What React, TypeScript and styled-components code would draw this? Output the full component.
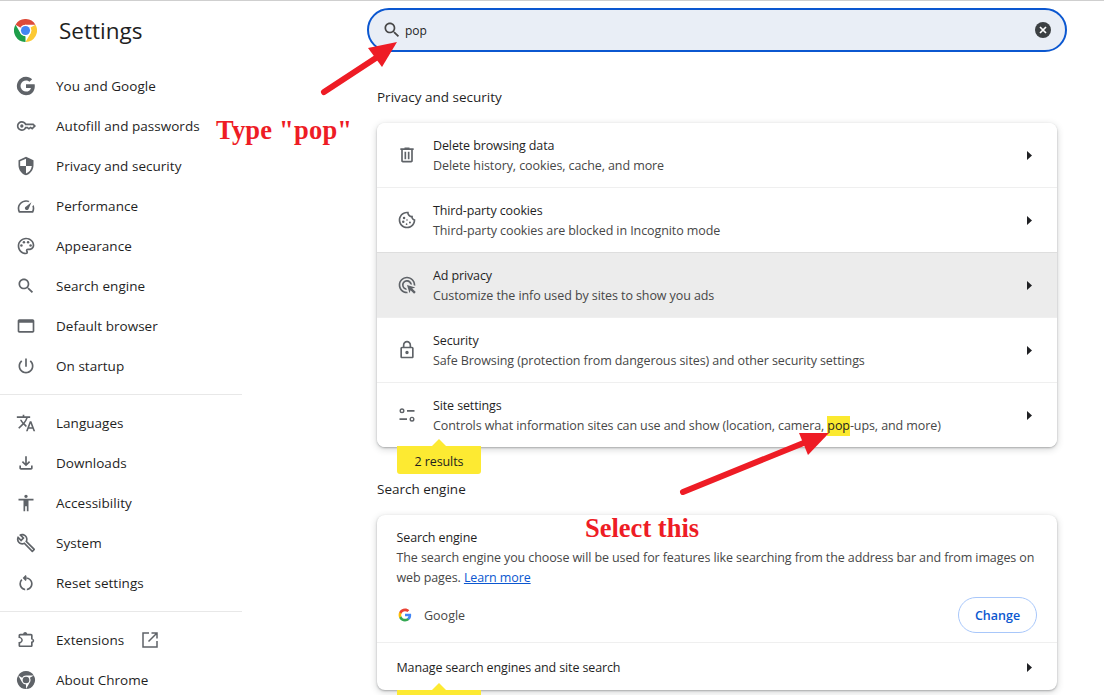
import React from "react";
import styled, { createGlobalStyle } from "styled-components";

const Global = createGlobalStyle`
  html, body { margin: 0; padding: 0; background: #fff; }
  body { font-family: "Open Sans", "Noto Sans", "Liberation Sans", sans-serif; font-size: 13px; color: #1f1f1f; }
`;

const Page = styled.div`
  position: relative; width: 1104px; height: 695px; overflow: hidden;
  display: flex; box-sizing: border-box; border-top: 1px solid #cfcfcf; background: #fff;
`;
const Sidebar = styled.aside`
  width: 242px; flex: none; display: flex; flex-direction: column;
`;
const Brand = styled.div`
  display: flex; align-items: center; height: 62px; padding-left: 14px; box-sizing: border-box; flex: none; padding-bottom: 4px;
`;
const BrandName = styled.h1`
  margin: 0 0 0 22px; font-size: 22.5px; font-weight: 500; color: #1f1f1f;
`;
const Nav = styled.nav`
  display: flex; flex-direction: column; padding-top: 3px;
`;
const NavItem = styled.div`
  height: 40px; flex: none; display: flex; align-items: center; padding-left: 16px;
`;
const NavIcon = styled.svg`
  width: 20px; height: 20px; flex: none; fill: #5f6368;
`;
const NavLabel = styled.span`
  margin-left: 20px; font-size: 13.5px; font-weight: 500; letter-spacing: 0.03px; color: #1f1f1f; white-space: nowrap;
`;
const NavDivider = styled.div`
  height: 1px; background: #e8e8e8; margin: 8px 0;
`;
const ExternalIcon = styled.svg`
  width: 18px; height: 18px; margin-left: 17px; fill: none; stroke: #5f6368; stroke-width: 1.5;
`;

const Main = styled.main`
  margin-left: 125px; width: 700px; display: flex; flex-direction: column;
`;
const SearchBar = styled.div`
  margin-top: 7px; height: 44px; box-sizing: border-box; border: 2px solid #0b57d0; border-radius: 22px;
  background: #e9eef6; display: flex; align-items: center; padding: 0 13px 0 13px; flex: none;
`;
const SearchIcon = styled.svg`
  width: 20px; height: 20px; fill: #474747; flex: none;
`;
const SearchText = styled.span`
  margin-left: 3px; padding-top: 1px; font-size: 12px; font-weight: 500; flex: 1; color: #1f1f1f;
`;
const ClearIcon = styled.svg`
  width: 18px; height: 18px; flex: none;
`;
const Section = styled.section`
  margin: 0 10px; position: relative; display: flex; flex-direction: column;
`;
const SectionTitle = styled.h2<{ $top: number; $bottom: number }>`
  margin: ${(p) => p.$top}px 0 ${(p) => p.$bottom}px; font-size: 13.5px; line-height: 20px; font-weight: 400;
  color: #1f1f1f;
`;
const Card = styled.div`
  background: #fff; border-radius: 8px; display: flex; flex-direction: column; overflow: hidden;
  box-shadow: 0 1px 2px rgba(60,64,67,.35), 0 2px 6px 1px rgba(60,64,67,.18);
`;
const Row = styled.div<{ $active?: boolean; $first?: boolean }>`
  height: ${(p) => (p.$first ? 64 : 65)}px; box-sizing: border-box; flex: none; display: flex; align-items: center;
  padding: 0 20px; background: ${(p) => (p.$active ? "#ececec" : "#fff")};
  border-top: ${(p) => (p.$first ? "none" : `1px solid ${p.$active ? "#dedede" : "#efefef"}`)};
`;
const RowIcon = styled.svg`
  width: 20px; height: 20px; fill: #5f6368; flex: none; margin-right: 16px;
`;
const RowText = styled.div`
  flex: 1; display: flex; flex-direction: column; line-height: 20px; white-space: nowrap; padding-top: 2px;
`;
const RowTitle = styled.div`
  font-size: 12.5px; color: #1f1f1f; letter-spacing: -0.12px;
`;
const RowSub = styled.div`
  font-size: 12.5px; color: #474747; letter-spacing: -0.09px;
`;
const Mark = styled.mark`
  background: #fbe92f; color: #1f1f1f; display: inline-block;
`;
const Caret = styled.svg`
  width: 5px; height: 9px; fill: #202124; flex: none; margin-right: 5px;
`;
const Bubble = styled.div<{ $top: number }>`
  position: absolute; left: 20px; top: ${(p) => p.$top}px; width: 84px; height: 28px; background: #fdea32; border-radius: 0 0 3px 3px;
  display: flex; align-items: center; justify-content: center; padding-top: 2px; box-sizing: border-box;
  font-size: 12.5px; color: #1f1f1f; letter-spacing: -0.1px;
  &::before {
    content: ""; position: absolute; left: 35px; top: -7px; border-left: 7px solid transparent; border-right: 7px solid transparent;
    border-bottom: 7px solid #fdea32;
  }
`;
const EngineIntro = styled.div`
  padding: 13px 20px 0 19.5px; line-height: 20px; height: 78px; box-sizing: border-box; flex: none;
`;
const EngineSub = styled.div`
  font-size: 12.5px; color: #474747; letter-spacing: -0.1px;
`;
const Link = styled.a`
  color: #0b57d0; text-decoration: underline;
`;
const EngineChoice = styled.div`
  display: flex; align-items: center; padding: 0 20px 5px 20px; height: 49px; flex: none; box-sizing: border-box;
`;
const GoogleMark = styled.svg`
  width: 14px; height: 14px; margin-left: 1px; flex: none;
`;
const EngineName = styled.span`
  margin-left: 12px; flex: 1; font-size: 12.5px; color: #474747;
`;
const ChangeButton = styled.button`
  width: 79px; height: 36px; box-sizing: border-box; border: 1px solid #a8c7fa; border-radius: 18px; background: #fff;
  color: #0b57d0; font: 600 12.5px "Open Sans", sans-serif; padding: 0;
`;
const ManageRow = styled.div`
  height: 48px; box-sizing: border-box; border-top: 1px solid #efefef; display: flex; align-items: center; padding: 2px 20px 0 19.5px;
  font-size: 12.5px; letter-spacing: -0.12px; justify-content: space-between; flex: none;
`;
const Annotation = styled.div<{ $left: number; $top: number; $spacing?: number }>`
  position: absolute; left: ${(p) => p.$left}px; top: ${(p) => p.$top}px; letter-spacing: ${(p) => p.$spacing ?? 0}px;
  font: bold 26.5px/30px "Liberation Serif", serif; color: #ee1c25; white-space: nowrap;
`;
const Overlay = styled.svg`
  position: absolute; left: 0; top: -1px; width: 1104px; height: 695px; pointer-events: none;
`;

const P = {
  key: "M7 14a2 2 0 1 1 0-4 2 2 0 0 1 0 4zm0 4q-2.500 0-4.250-1.750T1 12q0-2.500 1.750-4.250T7 6q1.675 0 3.038.825T12.200 9H21l3 3-4.500 4.500-2-1.500-2 1.500L13.375 15H12.200q-.8 1.350-2.163 2.175T7 18zm0-2q1.400 0 2.463-.85T10.850 13h3.150l1.450 1.025L17.500 12.500l1.775 1.375L21.150 12l-1-1H10.850q-.3-1.300-1.388-2.150T7 8q-1.650 0-2.825 1.175T3 12t1.175 2.825T7 16z",
  shield: "M12 1 3 5v6c0 5.55 3.84 10.74 9 12 5.16-1.26 9-6.45 9-12V5l-9-4zm0 10.99h7c-.53 4.12-3.28 7.79-7 8.94V12H5V6.3l7-3.11v8.8z",
  gauge: "M12 5C6.5 5 2 9.5 2 15c0 1.9.5 3.6 1.4 5h17.2c.9-1.4 1.4-3.1 1.4-5 0-1.5-.3-2.9-.9-4.2l-1.5 1.5c.3.8.4 1.7.4 2.7 0 1.1-.3 2.1-.7 3H4.7c-.4-.9-.7-1.9-.7-3 0-4.4 3.6-8 8-8 1 0 1.9.2 2.7.5l1.5-1.5C14.9 5.3 13.5 5 12 5zm6.5 2.5-6.4 5a2.3 2.3 0 1 0 3 3l3.4-8z",
  palette: "M12 22C6.49 22 2 17.51 2 12S6.49 2 12 2s10 4.04 10 9c0 3.31-2.69 6-6 6h-1.77c-.28 0-.5.22-.5.5 0 .12.05.23.13.33.41.47.64 1.06.64 1.67A2.5 2.5 0 0 1 12 22zm0-18c-4.41 0-8 3.59-8 8s3.59 8 8 8c.28 0 .5-.22.5-.5a.54.54 0 0 0-.14-.35c-.41-.46-.63-1.05-.63-1.65a2.5 2.5 0 0 1 2.5-2.5H16c2.21 0 4-1.79 4-4 0-3.86-3.59-7-8-7z",
  search: "M15.5 14h-.79l-.28-.27C15.41 12.59 16 11.11 16 9.5 16 5.91 13.09 3 9.5 3S3 5.91 3 9.5 5.91 16 9.5 16c1.61 0 3.09-.59 4.23-1.57l.27.28v.79l5 4.99L20.49 19l-4.99-5zm-6 0C7.01 14 5 11.99 5 9.5S7.01 5 9.5 5 14 7.01 14 9.5 11.99 14 9.5 14z",
  browser: "M20 4H4c-1.1 0-2 .9-2 2v12c0 1.1.9 2 2 2h16c1.1 0 2-.9 2-2V6c0-1.1-.9-2-2-2zm0 14H4V8h16v10z",
  power: "M13 3h-2v10h2V3zm4.83 2.17l-1.42 1.42C17.99 7.86 19 9.81 19 12c0 3.87-3.13 7-7 7s-7-3.13-7-7c0-2.19 1.01-4.14 2.58-5.42L6.17 5.17C4.23 6.82 3 9.26 3 12c0 4.97 4.03 9 9 9s9-4.03 9-9c0-2.74-1.23-5.18-3.17-6.83z",
  translate: "M12.87 15.07l-2.54-2.51.03-.03c1.74-1.94 2.98-4.17 3.71-6.53H17V4h-7V2H8v2H1v1.99h11.17C11.5 7.92 10.44 9.75 9 11.35 8.07 10.32 7.3 9.19 6.69 8h-2c.73 1.63 1.73 3.17 2.98 4.56l-5.09 5.02L4 19l5-5 3.11 3.11.76-2.04zM18.5 10h-2L12 22h2l1.12-3h4.75L21 22h2l-4.5-12zm-2.62 7l1.62-4.33L19.12 17h-3.24z",
  download: "M12 16 7 11l1.4-1.45 2.6 2.6V4h2v8.15l2.6-2.6L17 11l-5 5Zm-6 4q-.825 0-1.413-.588T4 18v-3h2v3h12v-3h2v3q0 .825-.588 1.413T18 20H6Z",
  access: "M12 2c1.1 0 2 .9 2 2s-.9 2-2 2-2-.9-2-2 .9-2 2-2zm9 7h-6v13h-2v-6h-2v6H9V9H3V7h18v2z",
  wrench: "m22.61 18.99-9.08-9.08c.93-2.34.45-5.1-1.44-7C9.79.61 6.21.4 3.66 2.25L7.5 6.1 6.08 7.51 2.25 3.69C.39 6.23.6 9.82 2.9 12.11c1.86 1.86 4.57 2.35 6.89 1.48l9.11 9.11c.39.39 1.02.39 1.41 0l2.3-2.3c.4-.38.4-1.01 0-1.41zm-3 1.6-9.46-9.46c-.61.45-1.29.72-2 .82-1.36.2-2.79-.21-3.83-1.25C3.37 9.76 2.93 8.5 3 7.26l3.09 3.09 4.24-4.24-3.09-3.09c1.24-.07 2.49.37 3.44 1.31 1.08 1.08 1.49 2.57 1.24 3.96-.12.71-.42 1.37-.88 1.96l9.45 9.45-.88.88z",
  reset: "M6 13c0-1.65.67-3.15 1.76-4.24L6.34 7.34A7.95 7.95 0 0 0 4 13c0 4.08 3.05 7.44 7 7.93v-2.02c-2.83-.48-5-2.94-5-5.91zm14 0c0-4.42-3.58-8-8-8-.06 0-.12.01-.18.01l1.09-1.09L11.5 2.5 8 6l3.5 3.5 1.41-1.41-1.08-1.08c.06 0 .12-.01.17-.01 3.31 0 6 2.69 6 6 0 2.97-2.17 5.43-5 5.91v2.02c3.95-.49 7-3.85 7-7.93z",
  extension: "M11 2.5c-1.2 0-2.2.9-2.4 2H5C3.9 4.5 3 5.400 3 6.500v3.200h.8c1.500 0 2.600 1.100 2.600 2.400S5.300 14.500 3.800 14.500H3v4c0 1.100.9 2 2 2h13c1.100 0 2-.9 2-2v-3.100c1.100-.3 1.800-1.300 1.800-2.400s-.7-2.100-1.800-2.400V6.500c0-1.100-.9-2-2-2h-4.600c-.2-1.100-1.200-2-2.400-2zM5 6.500h13v5h.9c.6 0 1 .6 1 1.100s-.4 1.200-1 1.200H18v4.700H5v-2.300c1.900-.7 3.200-2.400 3.200-4.100S6.900 9 5 8.300V6.500z",
  trash: "M15 4V3H9v1H4v2h1v13c0 1.1.9 2 2 2h10c1.1 0 2-.9 2-2V6h1V4h-5zm2 15H7V6h10v13zM9 8h2v9H9zm4 0h2v9h-2z",
  cookie: "M21.95 10.99c-1.79-.03-3.7-1.95-2.68-4.22-2.97 1-5.78-1.59-5.19-4.56C7.11.74 2 6.41 2 12c0 5.52 4.48 10 10 10 5.89 0 10.54-5.08 9.95-11.01zM12 20c-4.41 0-8-3.59-8-8 0-3.31 2.73-8.18 8.08-8.02.42 2.54 2.44 4.56 4.99 4.94.07.36.52 2.55 2.92 3.63C19.7 16.86 16.06 20 12 20z",
  ads: "M11.71 17.99A5.993 5.993 0 0 1 6 12c0-3.31 2.69-6 6-6 3.22 0 5.84 2.53 5.99 5.71l-2.1-.63a3.999 3.999 0 1 0-4.81 4.81l.63 2.1zM22 12c0 .3-.01.6-.04.9l-1.97-.59c.01-.1.01-.21.01-.31 0-4.42-3.58-8-8-8s-8 3.58-8 8 3.58 8 8 8c.1 0 .21 0 .31-.01l.59 1.97c-.3.03-.6.04-.9.04-5.52 0-10-4.48-10-10S6.48 2 12 2s10 4.48 10 10zm-3.77 4.26L22 15l-10-3 3 10 1.26-3.77 4.27 4.27 1.98-1.98-4.28-4.26z",
  lock: "M18 8h-1V6c0-2.76-2.24-5-5-5S7 3.24 7 6v2H6c-1.1 0-2 .9-2 2v10c0 1.1.9 2 2 2h12c1.1 0 2-.9 2-2V10c0-1.1-.9-2-2-2zM9 6c0-1.66 1.34-3 3-3s3 1.34 3 3v2H9V6zm9 14H6V10h12v10zm-6-3c1.1 0 2-.9 2-2s-.9-2-2-2-2 .9-2 2 .9 2 2 2z",
  tune: "M6 4a3 3 0 1 0 0 6 3 3 0 0 0 0-6zm0 1.700a1.300 1.300 0 1 1 0 2.600 1.300 1.300 0 0 1 0-2.600zM12 6h9v2h-9zM18 14a3 3 0 1 0 0 6 3 3 0 0 0 0-6zm0 1.700a1.300 1.300 0 1 1 0 2.600 1.300 1.300 0 0 1 0-2.600zM3 16h9v2H3z",
};

const G_PATHS = [
  ["#4285F4", "M22.56 12.25c0-.78-.07-1.53-.2-2.25H12v4.26h5.92c-.26 1.37-1.04 2.53-2.21 3.31v2.77h3.57c2.08-1.92 3.28-4.74 3.28-8.09z"],
  ["#34A853", "M12 23c2.97 0 5.46-.98 7.28-2.66l-3.57-2.77c-.98.66-2.23 1.06-3.71 1.06-2.86 0-5.29-1.93-6.16-4.53H2.18v2.84C3.99 20.53 7.7 23 12 23z"],
  ["#FBBC05", "M5.84 14.09c-.22-.66-.35-1.36-.35-2.09s.13-1.43.35-2.09V7.07H2.18C1.43 8.55 1 10.22 1 12s.43 3.45 1.18 4.93l2.85-2.22.81-.62z"],
  ["#EA4335", "M12 5.38c1.62 0 3.06.56 4.21 1.64l3.15-3.15C17.45 2.09 14.97 1 12 1 7.7 1 3.99 3.47 2.18 7.07l3.66 2.84c.87-2.6 3.3-4.53 6.16-4.53z"],
];

const LogoSvg = styled.svg`
  width: 23px; height: 23px; flex: none;
`;
const SECTOR = "M3.2 12A24 24 0 0 1 44.800 12H24A12 12 0 0 0 13.600 18Z";
const ChromeLogo = () => (
  <LogoSvg viewBox="0 0 48 48">
    <circle cx="24" cy="24" r="24" fill="#fff" />
    <path d={SECTOR} fill="#dd4b3a" />
    <path d={SECTOR} fill="#fcc934" transform="rotate(120 24 24)" />
    <path d={SECTOR} fill="#1e9e4a" transform="rotate(240 24 24)" />
    <circle cx="24" cy="24" r="12" fill="#fff" />
    <circle cx="24" cy="24" r="9.500" fill="#4285f4" />
  </LogoSvg>
);
const ChromeMono = () => (
  <NavIcon viewBox="0 0 48 48">
    <path d={SECTOR} transform="translate(24 24) scale(.9) translate(-24 -24)" />
    <path d={SECTOR} transform="rotate(120 24 24) translate(24 24) scale(.9) translate(-24 -24)" />
    <path d={SECTOR} transform="rotate(240 24 24) translate(24 24) scale(.9) translate(-24 -24)" />
    <circle cx="24" cy="24" r="8" />
  </NavIcon>
);
const Icon = ({ d, children }: { d: string; children?: React.ReactNode }) => (
  <NavIcon viewBox="0 0 24 24"><path d={d} fillRule="evenodd" />{children}</NavIcon>
);
const RIcon = ({ d, children }: { d: string; children?: React.ReactNode }) => (
  <RowIcon viewBox="0 0 24 24"><path d={d} />{children}</RowIcon>
);
const RightCaret = () => <Caret viewBox="0 0 5 9"><path d="M0 0 5 4.500 0 9z" /></Caret>;

const navA: [string, React.ReactNode][] = [
  ["You and Google", <NavIcon key="g" viewBox="0 0 24 24">{G_PATHS.map(([, d]) => <path key={d} d={d} />)}</NavIcon>],
  ["Autofill and passwords", <Icon key="k" d={P.key} />],
  ["Privacy and security", <Icon key="s" d={P.shield} />],
  ["Performance", <Icon key="p" d={P.gauge} />],
  ["Appearance", <Icon key="a" d={P.palette}><circle cx="6.5" cy="11.500" r="1.500" /><circle cx="9.500" cy="7.500" r="1.500" /><circle cx="14.500" cy="7.500" r="1.500" /><circle cx="17.500" cy="11.500" r="1.500" /></Icon>],
  ["Search engine", <Icon key="se" d={P.search} />],
  ["Default browser", <Icon key="b" d={P.browser} />],
  ["On startup", <Icon key="o" d={P.power} />],
];
const navB: [string, React.ReactNode][] = [
  ["Languages", <Icon key="l" d={P.translate} />],
  ["Downloads", <Icon key="d" d={P.download} />],
  ["Accessibility", <Icon key="ac" d={P.access} />],
  ["System", <Icon key="w" d={P.wrench} />],
  ["Reset settings", <Icon key="r" d={P.reset} />],
];

const rows = [
  { t: "Delete browsing data", s: "Delete history, cookies, cache, and more", i: <RIcon d={P.trash} /> },
  { t: "Third-party cookies", s: "Third-party cookies are blocked in Incognito mode", i: <RIcon d={P.cookie}><circle cx="8.500" cy="9.500" r="1.500" /><circle cx="7.500" cy="14" r="1.500" /><circle cx="11.500" cy="17" r="1" /><circle cx="15.500" cy="15" r="1.200" /><circle cx="12" cy="12" r="1" /></RIcon> },
  { t: "Ad privacy", s: "Customize the info used by sites to show you ads", i: <RIcon d={P.ads} />, active: true },
  { t: "Security", s: "Safe Browsing (protection from dangerous sites) and other security settings", i: <RIcon d={P.lock} /> },
];

export default function App() {
  return (
    <>
      <Global />
      <Page>
        <Sidebar>
          <Brand>
            <ChromeLogo />
            <BrandName>Settings</BrandName>
          </Brand>
          <Nav>
            {navA.map(([l, i]) => <NavItem key={l}>{i}<NavLabel>{l}</NavLabel></NavItem>)}
            <NavDivider />
            {navB.map(([l, i]) => <NavItem key={l}>{i}<NavLabel>{l}</NavLabel></NavItem>)}
            <NavDivider />
            <NavItem>
              <Icon d={P.extension} />
              <NavLabel>Extensions</NavLabel>
              <ExternalIcon viewBox="0 0 18 18">
                <path d="M8 2H2v14h14v-6M7.500 10.500 16 2M10.500 2H16v5.500" />
              </ExternalIcon>
            </NavItem>
            <NavItem><ChromeMono /><NavLabel>About Chrome</NavLabel></NavItem>
          </Nav>
        </Sidebar>
        <Main>
          <SearchBar>
            <SearchIcon viewBox="0 0 24 24"><path d={P.search} /></SearchIcon>
            <SearchText>pop</SearchText>
            <ClearIcon viewBox="0 0 18 18">
              <circle cx="9" cy="9" r="8" fill="#3c4043" />
              <path d="M6 6l6 6M12 6l-6 6" stroke="#fff" strokeWidth="1.700" />
            </ClearIcon>
          </SearchBar>
          <Section>
            <SectionTitle $top={35} $bottom={16}>Privacy and security</SectionTitle>
            <Card>
              {rows.map((r, n) => (
                <Row key={r.t} $first={n === 0} $active={r.active}>
                  {r.i}
                  <RowText><RowTitle>{r.t}</RowTitle><RowSub>{r.s}</RowSub></RowText>
                  <RightCaret />
                </Row>
              ))}
              <Row>
                <RIcon d={P.tune} />
                <RowText>
                  <RowTitle>Site settings</RowTitle>
                  <RowSub>Controls what information sites can use and show (location, camera, <Mark>pop</Mark>-ups, and more)</RowSub>
                </RowText>
                <RightCaret />
              </Row>
            </Card>
            <Bubble $top={394}>2 results</Bubble>
          </Section>
          <Section>
            <SectionTitle $top={32} $bottom={16}>Search engine</SectionTitle>
            <Card>
              <EngineIntro>
                <RowTitle>Search engine</RowTitle>
                <EngineSub>The search engine you choose will be used for features like searching from the address bar and from images on web pages. <Link>Learn more</Link></EngineSub>
              </EngineIntro>
              <EngineChoice>
                <GoogleMark viewBox="0 0 24 24">{G_PATHS.map(([c, d]) => <path key={c} d={d} fill={c} />)}</GoogleMark>
                <EngineName>Google</EngineName>
                <ChangeButton>Change</ChangeButton>
              </EngineChoice>
              <ManageRow>Manage search engines and site search<RightCaret /></ManageRow>
            </Card>
            <Bubble $top={243}>&nbsp;</Bubble>
          </Section>
        </Main>
        <Overlay viewBox="0 0 1104 695">
          <path d="M324 92 382 54" stroke="#ee1c25" strokeWidth="6" strokeLinecap="round" />
          <path d="M397 42 368 48 382 67z" fill="#ee1c25" />
          <path d="M683 492 806 442" stroke="#ee1c25" strokeWidth="6" strokeLinecap="round" />
          <path d="M829 433 799 433 808 455z" fill="#ee1c25" />
        </Overlay>
        <Annotation $left={216} $top={114} $spacing={0.2}>Type "pop"</Annotation>
        <Annotation $left={585} $top={512}>Select this</Annotation>
      </Page>
    </>
  );
}
